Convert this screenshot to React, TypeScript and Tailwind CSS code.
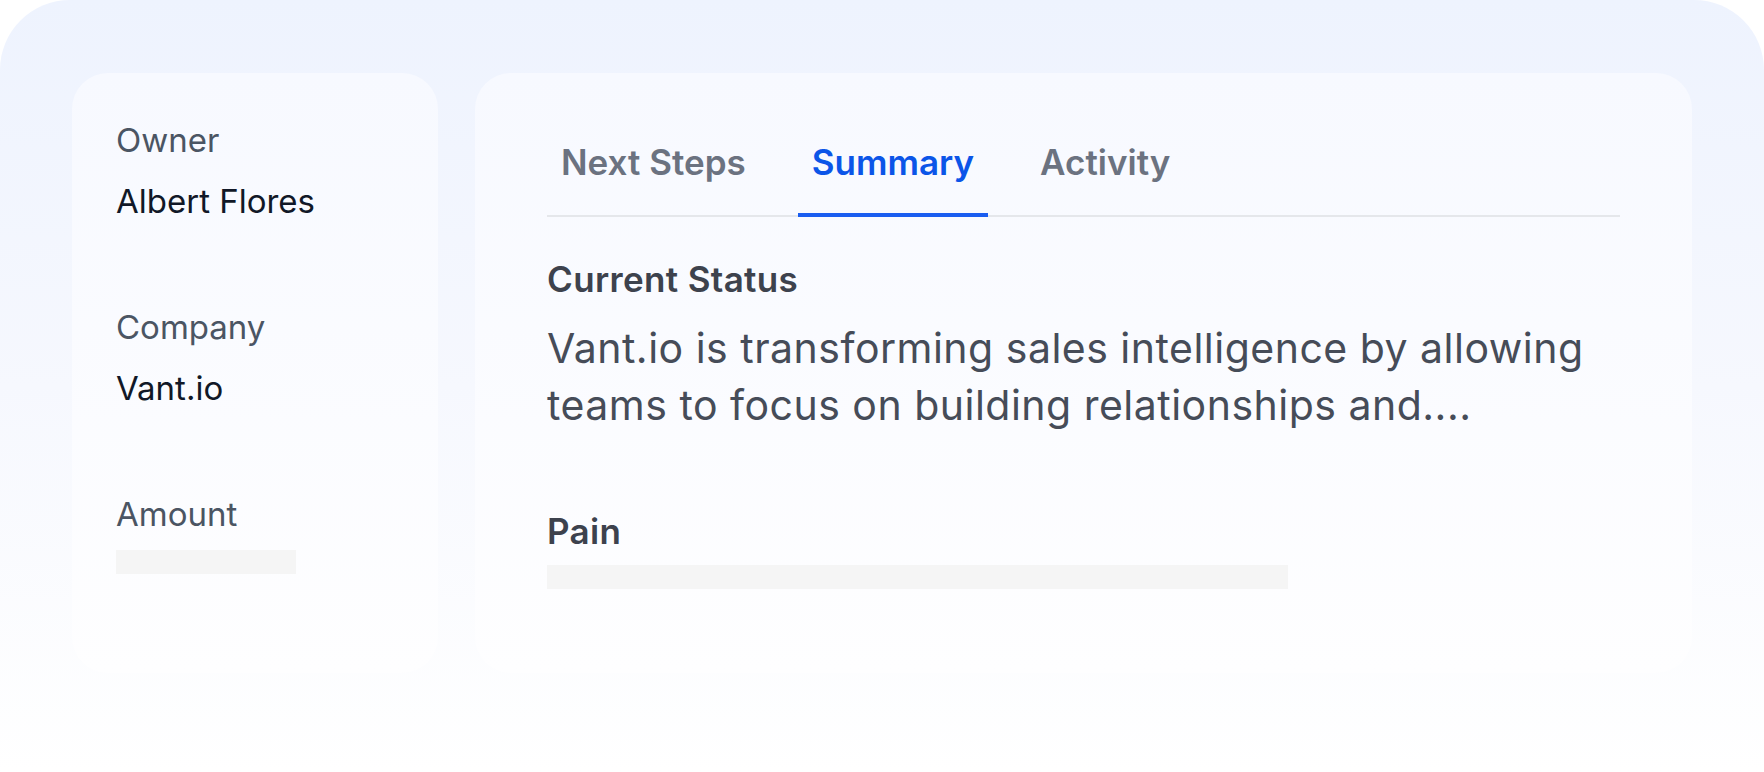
import React from "react";

const font = { fontFamily: "Inter, 'Noto Sans', sans-serif" };

function Field({ label, value, first }: { label: string; value?: string; first?: boolean }) {
  return (
    <div className={first ? "" : "mt-[86px]"}>
      <div className="text-[33px] leading-[40px] text-[#4b5563]">{label}</div>
      {value ? (
        <div className="mt-[21px] text-[33px] leading-[40px] text-[#111827]">{value}</div>
      ) : (
        <div className="mt-[16px] h-[24px] w-[180px] bg-[#f5f5f5]" />
      )}
    </div>
  );
}

export default function App() {
  return (
    <div className="h-[772px] w-full overflow-hidden bg-white" style={font}>
      <div className="flex h-full gap-[37px] rounded-t-[70px] bg-gradient-to-b from-[#eef3fe] via-[#f6f8fe] to-[#ffffff] px-[72px] pt-[73px]">
        <div className="h-[600px] w-[366px] shrink-0 rounded-[36px] bg-gradient-to-b from-[#f7f9ff] to-[#fefeff] px-[44px] pt-[47px]">
          <Field label="Owner" value="Albert Flores" first />
          <Field label="Company" value="Vant.io" />
          <Field label="Amount" />
        </div>
        <div className="h-[600px] flex-1 rounded-[36px] bg-gradient-to-b from-[#f7f9ff] to-[#fefeff] px-[72px] pt-[67px]">
          <div className="flex gap-[38px] border-b-2 border-[#e5e7eb]">
            <div className="px-[14px] pb-[31px] text-[35px] font-semibold leading-[44px] text-[#6b7280]">Next Steps</div>
            <div className="relative px-[14px] pb-[31px] text-[35px] font-semibold leading-[44px] text-[#0b55e8]">
              Summary
              <div className="absolute -bottom-[2px] left-0 right-0 h-[4px] bg-[#1a5df0]" />
            </div>
            <div className="px-[14px] pb-[31px] text-[35px] font-semibold leading-[44px] text-[#6b7280]">Activity</div>
          </div>
          <div className="mt-[40px] text-[35px] font-semibold leading-[44px] tracking-[0.01em] text-[#3d424d]">Current Status</div>
          <div className="mt-[19px] text-[41px] leading-[57px] tracking-[0.012em] text-[#464c58]">
            Vant.io is transforming sales intelligence by allowing teams to focus on building relationships and....
          </div>
          <div className="mt-[75px] text-[35px] font-semibold leading-[44px] tracking-[0.01em] text-[#3d424d]">Pain</div>
          <div className="mt-[12px] h-[24px] w-[741px] bg-[#f5f5f5]" />
        </div>
      </div>
    </div>
  );
}
